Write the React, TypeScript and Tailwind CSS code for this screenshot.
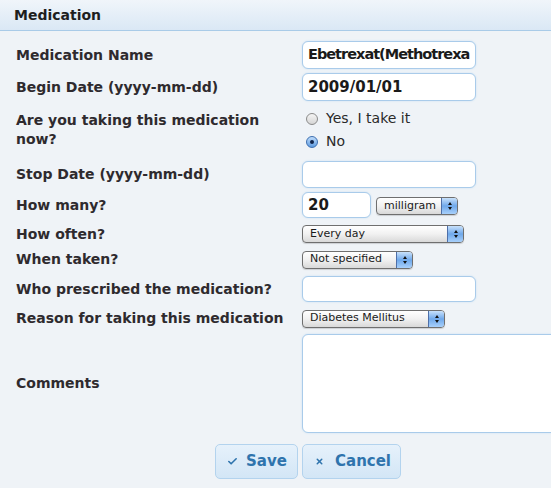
import { Check, X } from "lucide-react";

const FONT = "font-['DejaVu_Sans',sans-serif]";

function TextBox({ value, w = "w-[174px]", h = "h-[28px]", tight }: { value?: string; w?: string; h?: string; tight?: boolean }) {
  return (
    <div
      className={`${w} ${h} flex items-center overflow-hidden whitespace-nowrap rounded-[6px] border border-[#a9cbea] bg-white px-[5px] font-bold text-[#1a1a1a] shadow-[0_0_2px_#c5def3] ${
        tight ? "text-[14.5px] tracking-[-1px]" : "text-[15px]"
      }`}
    >
      {value}
    </div>
  );
}

function Select({ value, w }: { value: string; w: string }) {
  return (
    <div
      className={`${w} flex h-[18px] items-stretch overflow-hidden rounded-[4px] border border-[#6f6f6f] bg-gradient-to-b from-white via-[#f1f1f1] to-[#d9d9d9] text-[11px] text-[#1a1a1a] shadow-[0_1px_1px_rgba(0,0,0,0.15)]`}
    >
      <span className="flex flex-1 items-center whitespace-nowrap pl-[7px]">{value}</span>
      <span className="flex w-[16px] flex-col items-center justify-center gap-[2px] border-l border-[#4e6fa8] bg-gradient-to-b from-[#c8e1fb] via-[#6fa8ea] to-[#a8d0fb]">
        <span className="h-0 w-0 border-x-[2.5px] border-b-[3px] border-x-transparent border-b-[#111]" />
        <span className="h-0 w-0 border-x-[2.5px] border-t-[3px] border-x-transparent border-t-[#111]" />
      </span>
    </div>
  );
}

function Radio({ checked, label }: { checked?: boolean; label: string }) {
  return (
    <div className="flex items-center gap-[8px] text-[14px] leading-[19px] text-[#2a2a2a]">
      <span
        className={[
          "flex h-[12px] w-[12px] items-center justify-center rounded-full border",
          checked
            ? "border-[#3d6fb0] bg-gradient-to-b from-[#bfdcfa] to-[#5e9be0]"
            : "border-[#8a8a8a] bg-gradient-to-b from-[#f4f4f4] to-[#d6d6d6]",
        ].join(" ")}
      >
        {checked && <span className="h-[4px] w-[4px] rounded-full bg-[#10244a]" />}
      </span>
      {label}
    </div>
  );
}

function Row({ label, h, children }: { label: React.ReactNode; h: string; children: React.ReactNode }) {
  return (
    <div className={`flex ${h} items-center`}>
      <div className="w-[302px] shrink-0 pl-[16px] text-[14px] font-bold leading-[19px] text-[#2e2a2e]">{label}</div>
      <div className="flex items-center">{children}</div>
    </div>
  );
}

export default function App() {
  return (
    <div className={`h-[488px] w-[551px] overflow-hidden bg-[#eff3f7] ${FONT}`}>
      <div className="flex h-[31px] items-center border-b border-[#a9cbe8] bg-gradient-to-b from-[#f0f5fa] to-[#dae8f5] pl-[14px] text-[14px] font-bold text-[#1e1e1e]">
        Medication
      </div>

      <div className="pt-[8px]">
        <Row label="Medication Name" h="h-[32px]">
          <TextBox value="Ebetrexat(Methotrexa" tight />
        </Row>
        <Row label="Begin Date (yyyy-mm-dd)" h="h-[32px]">
          <TextBox value="2009/01/01" />
        </Row>
        <div className="flex h-[55px] items-start pt-[8px]">
          <div className="w-[302px] shrink-0 pl-[16px] text-[14px] font-bold leading-[19px] text-[#2e2a2e]">
            Are you taking this medication
            <br />
            now?
          </div>
          <div className="-mt-[2px] flex flex-col gap-[4px] pl-[4px]">
            <Radio label="Yes, I take it" />
            <Radio checked label="No" />
          </div>
        </div>
        <Row label="Stop Date (yyyy-mm-dd)" h="h-[32px]">
          <TextBox h="h-[27px]" />
        </Row>
        <Row label="How many?" h="h-[30px]">
          <TextBox value="20" w="w-[69px]" h="h-[26px]" />
          <div className="ml-[5px] mt-[2px]">
            <Select value="milligram" w="w-[82px]" />
          </div>
        </Row>
        <Row label="How often?" h="h-[28px]">
          <Select value="Every day" w="w-[162px]" />
        </Row>
        <Row label="When taken?" h="h-[23px]">
          <Select value="Not specified" w="w-[111px]" />
        </Row>
        <Row label="Who prescribed the medication?" h="h-[36px]">
          <TextBox h="h-[26px]" />
        </Row>
        <Row label="Reason for taking this medication" h="h-[23px]">
          <Select value="Diabetes Mellitus" w="w-[143px]" />
        </Row>
        <Row label="Comments" h="h-[106px]">
          <div className="h-[99px] w-[270px] rounded-[6px] border border-[#a9cbea] bg-white shadow-[0_0_2px_#c5def3]" />
        </Row>

        <div className="mt-[8px] flex gap-[4px] pl-[215px]">
          <button className="flex h-[35px] w-[83px] items-center gap-[8px] rounded-[5px] border border-[#b3d3ee] bg-gradient-to-b from-[#e6f1fb] to-[#d3e6f6] pl-[11px] text-[15px] font-bold text-[#2f74ad]">
            <Check size={11} strokeWidth={3.5} />
            Save
          </button>
          <button className="flex h-[35px] w-[99px] items-center gap-[11px] rounded-[5px] border border-[#b3d3ee] bg-gradient-to-b from-[#e6f1fb] to-[#d3e6f6] pl-[12px] text-[15px] font-bold text-[#2f74ad]">
            <X size={9} strokeWidth={4} />
            Cancel
          </button>
        </div>
      </div>
    </div>
  );
}
